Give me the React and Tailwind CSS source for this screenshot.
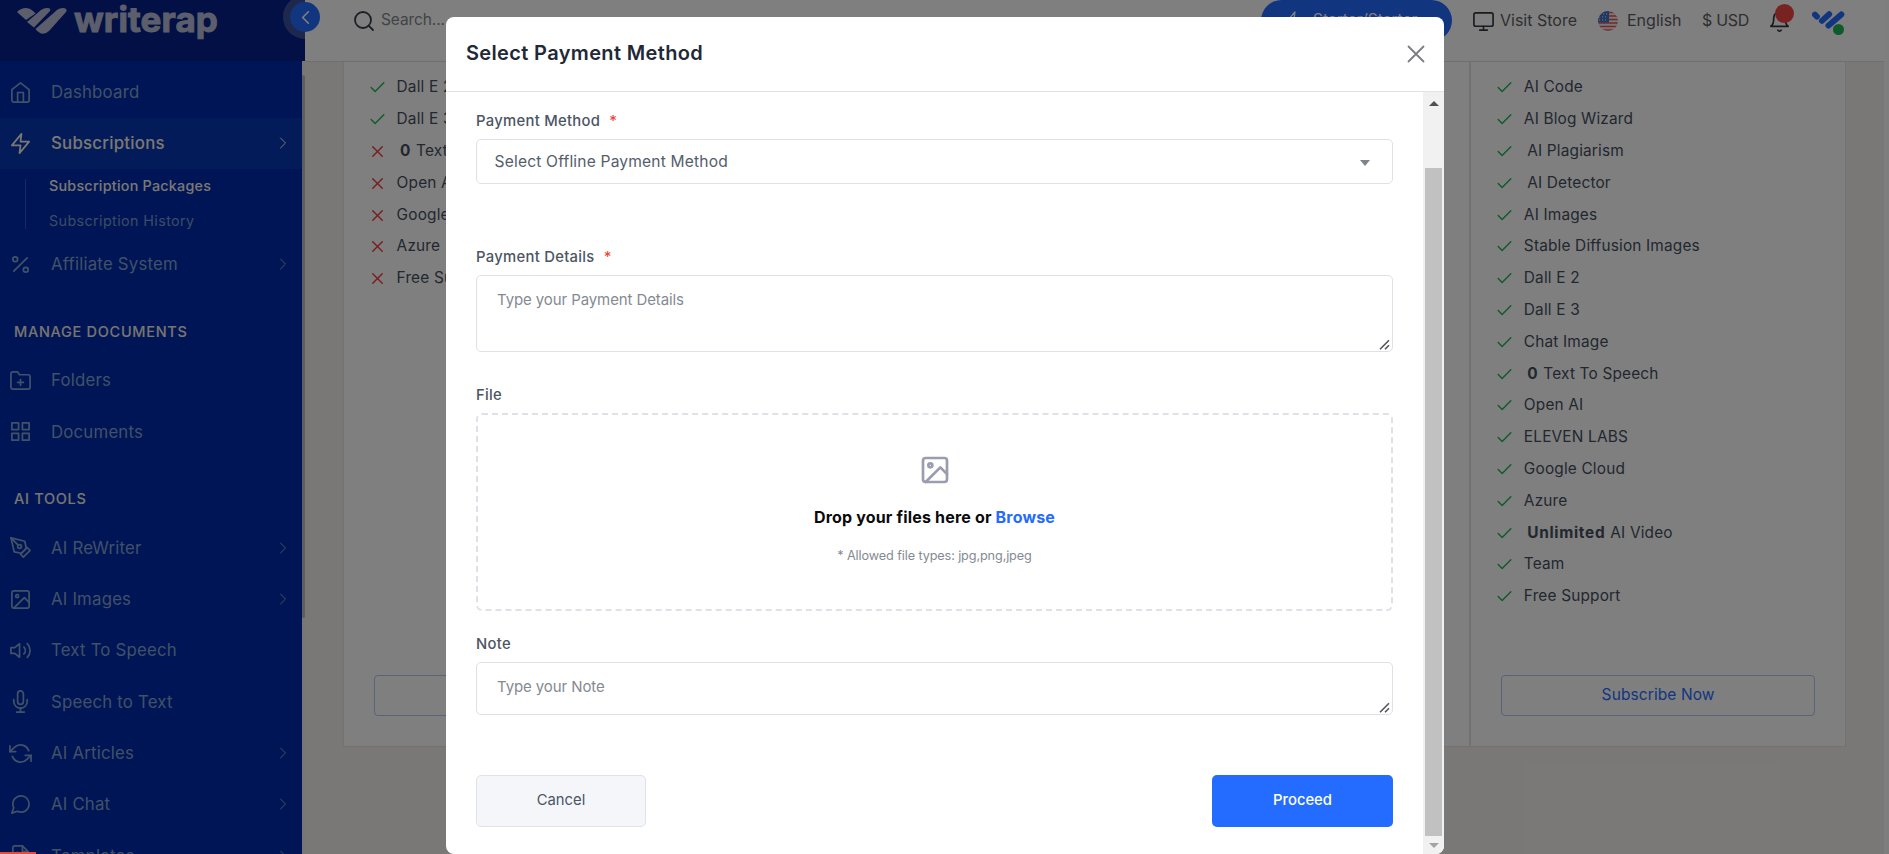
import React from "react";
import {
  FiHome, FiZap, FiPercent, FiFolderPlus, FiGrid, FiPenTool, FiImage, FiVolume2,
  FiMic, FiRefreshCcw, FiMessageCircle, FiFileText, FiChevronRight, FiChevronLeft,
  FiSearch, FiMonitor, FiBell, FiCheck, FiX,
} from "react-icons/fi";

function NavItem({ icon: Icon, label, arrow, active }) {
  return (
    <div
      className={
        "flex h-[51.3px] shrink-0 items-center pl-[9px] pr-[9px] " +
        (active ? "bg-[#0636b0] text-[#f5f0e8]" : "text-[#82a2cf]")
      }
    >
      <Icon size={23} strokeWidth={1.8} />
      <span className={"ml-[19px] flex-1 pt-px text-[16.8px] " + (active ? "font-medium tracking-[0.25px]" : "tracking-[0.2px]")}>
        {label}
      </span>
      {arrow && <FiChevronRight size={20} strokeWidth={1.2} />}
    </div>
  );
}

function NavHeading({ children }) {
  return (
    <div className="flex h-[65px] shrink-0 items-end pb-[13px] pl-[14px] text-[14.5px] font-medium leading-5 tracking-[0.7px] text-[#f0ebe3]">
      {children}
    </div>
  );
}

function BrandMark({ className }) {
  return (
    <svg viewBox="0 0 100 54" className={className} fill="none" stroke="currentColor" strokeLinecap="round">
      <path d="M9 10.500L15 16.500" strokeWidth="18" />
      <path d="M52 9.500L30 29.500" strokeWidth="18" />
      <path d="M89 10L50 44" strokeWidth="18" />
    </svg>
  );
}

function Logo() {
  return (
    <svg viewBox="0 0 50 27" className="h-[27px] w-[50px]" fill="#b9bfd6">
      <path d="M0 4 Q4 0 9 0 Q13 0 16 3 L18.500 5.500 L9 12 Z" />
      <path d="M10 14 L24 2 Q27 0 30 0 Q35 0 32.500 3.500 L17 19.500 Z" />
      <path d="M18.500 21 L40 2 Q42.500 0 46 0 Q51 0.500 49 4 L32 23 Q25 29.500 18.500 21 Z" />
    </svg>
  );
}

function Feature({ ok = true, bold, indent, children }) {
  return (
    <li className="flex h-[31.8px] items-center text-[15.4px] tracking-[0.17px] text-[#464f5e]">
      {ok ? (
        <FiCheck size={19} strokeWidth={1.8} className="mt-[2px] text-[#1fb45a]" />
      ) : (
        <FiX size={19} strokeWidth={1.8} className="mt-[2px] text-[#ee3d3d]" />
      )}
      <span className={indent ? "ml-[13px]" : "ml-[9.6px]"}>
        {bold && <b className="mr-[5px] font-bold tracking-[0.7px]">{bold}</b>}
        {children}
      </span>
    </li>
  );
}

function PlanCard({ className = "", children }) {
  return (
    <div className={"flex flex-1 flex-col border-b border-[#e8e5e1] bg-white pb-[30px] pt-[9px] " + className}>
      <ul className="flex-1 pl-[24px]">{children}</ul>
      <div className="mx-[30px] flex h-[41px] items-center justify-center rounded-[4px] border border-[#b0c4f4] pb-px text-[15.5px] tracking-[0.1px] text-[#246bff]">
        Subscribe Now
      </div>
    </div>
  );
}

function Flag() {
  return (
    <svg viewBox="0 0 20 20" className="size-5">
      <clipPath id="flag">
        <circle cx="10" cy="10" r="10" />
      </clipPath>
      <g clipPath="url(#flag)">
        <rect width="20" height="20" fill="#f3ece8" />
        <path d="M0 1.500h20M0 5h20M0 8.500h20M0 12h20M0 15.500h20M0 19h20" stroke="#e2545a" strokeWidth="1.700" />
        <rect width="11" height="11.500" fill="#3f6fc4" />
        <path d="M2 3h8M1 6h9M1 9h9" stroke="#e8eefa" strokeDasharray="1.200 1.800" strokeWidth="1.200" />
      </g>
    </svg>
  );
}

function Sidebar() {
  return (
    <aside className="relative flex h-[854px] w-[305px] shrink-0 flex-col bg-[#002aaa] text-white">
      <div className="flex h-[61px] shrink-0 items-start bg-[#04218c] pl-[17px] pt-[8px]">
        <Logo />
        <span className="ml-[7px] mt-[-6px] text-[35px] font-bold leading-[35px] tracking-[0.1px] text-[#b9bfd6] [-webkit-text-stroke:1px_#b9bfd6]">
          writerap
        </span>
      </div>
      <div className="flex min-h-0 flex-1">
        <nav className="flex w-[302px] flex-col overflow-hidden pt-[5.5px]">
          <NavItem icon={FiHome} label="Dashboard" />
          <NavItem icon={FiZap} label="Subscriptions" arrow active />
          <div className="flex h-[69.3px] shrink-0 items-center pl-[25px] text-[14.3px]">
            <div className="h-[50px] w-px bg-[#2456c8]" />
            <div className="ml-[23px] flex flex-col pb-[2px]">
              <span className="flex h-[35px] items-center font-medium tracking-[0.25px] text-[#f5f0e8]">Subscription Packages</span>
              <span className="flex h-[35px] items-center tracking-[0.4px] text-[#7898cc]">Subscription History</span>
            </div>
          </div>
          <NavItem icon={FiPercent} label="Affiliate System" arrow />
          <NavHeading>MANAGE DOCUMENTS</NavHeading>
          <NavItem icon={FiFolderPlus} label="Folders" />
          <NavItem icon={FiGrid} label="Documents" />
          <NavHeading>AI TOOLS</NavHeading>
          <NavItem icon={FiPenTool} label="AI ReWriter" arrow />
          <NavItem icon={FiImage} label="AI Images" arrow />
          <NavItem icon={FiVolume2} label="Text To Speech" />
          <NavItem icon={FiMic} label="Speech to Text" />
          <NavItem icon={FiRefreshCcw} label="AI Articles" arrow />
          <NavItem icon={FiMessageCircle} label="AI Chat" arrow />
          <NavItem icon={FiFileText} label="Templates" arrow />
        </nav>
        <div className="w-[3px] bg-[#f1efec] pt-[14px]">
          <div className="h-[543px] rounded bg-[#b9bcc4]" />
        </div>
      </div>
      <div className="absolute left-[283px] top-[-5px] h-[44px] w-[22px] rounded-l-full bg-[#3b5199]" />
      <div className="absolute left-[290px] top-[2px] flex size-[30px] items-center justify-center rounded-full bg-[#246bff]">
        <FiChevronLeft size={23} strokeWidth={1.7} />
      </div>
    </aside>
  );
}

function TopBar() {
  return (
    <header className="flex h-[62px] shrink-0 items-start border-b border-[#e0deda] bg-white pl-[47px] pr-[39px] text-[16px] text-[#5c5e63]">
      <div className="flex h-[41px] items-center">
        <FiSearch size={24} strokeWidth={1.8} className="text-[#3c3f48]" />
        <span className="ml-[5px] pb-px text-[15.5px] tracking-[-0.1px] text-[#85868b]">Search...</span>
      </div>
      <div className="flex-1" />
      <div className="flex h-[41px] w-[191px] items-center rounded-full bg-[#246bff] pl-[22px] text-[15.5px] text-white">
        <FiZap size={22} strokeWidth={1.5} />
        <span className="ml-[8px] pb-px">Starter/Starter</span>
      </div>
      <FiMonitor size={23} strokeWidth={1.7} className="ml-[20px] mt-[10px] text-[#33363c]" />
      <span className="ml-[5px] flex h-[39px] w-[98px] items-center">Visit Store</span>
      <div className="mt-[11px] w-[29px]">
        <Flag />
      </div>
      <span className="flex h-[39px] w-[75px] items-center">English</span>
      <span className="flex h-[39px] w-[66px] items-center tracking-[-0.3px]">$ USD</span>
      <div className="relative mt-[10px] w-[44px]">
        <FiBell size={23} strokeWidth={1.8} className="text-[#33363c]" />
        <span className="absolute left-[7px] top-[-6px] size-[19px] rounded-full bg-[#f04444]" />
      </div>
      <div className="relative mt-[11px] w-[33px] text-[#246bff]">
        <BrandMark className="h-[18px] w-[33px]" />
        <span className="absolute left-[21px] top-[13px] size-[11px] rounded-full bg-[#1fb455]" />
      </div>
    </header>
  );
}

function Plans() {
  return (
    <main className="flex flex-1 flex-col pl-[38px] pr-[38px]">
      <div className="flex h-[685px] border-x border-[#e8e5e1]">
        <PlanCard>
          <Feature>Dall E 2</Feature>
          <Feature>Dall E 3</Feature>
          <Feature ok={false} bold="0" indent>Text To Speech</Feature>
          <Feature ok={false}>Open AI</Feature>
          <Feature ok={false}>Google Cloud</Feature>
          <Feature ok={false}>Azure</Feature>
          <Feature ok={false}>Free Support</Feature>
        </PlanCard>
        <PlanCard className="border-l-2" />
        <PlanCard className="border-l-2" />
        <PlanCard className="border-l-2">
          <Feature>AI Code</Feature>
          <Feature>AI Blog Wizard</Feature>
          <Feature indent>AI Plagiarism</Feature>
          <Feature indent>AI Detector</Feature>
          <Feature>AI Images</Feature>
          <Feature>Stable Diffusion Images</Feature>
          <Feature>Dall E 2</Feature>
          <Feature>Dall E 3</Feature>
          <Feature>Chat Image</Feature>
          <Feature bold="0" indent>Text To Speech</Feature>
          <Feature>Open AI</Feature>
          <Feature>ELEVEN LABS</Feature>
          <Feature>Google Cloud</Feature>
          <Feature>Azure</Feature>
          <Feature bold="Unlimited" indent>AI Video</Feature>
          <Feature>Team</Feature>
          <Feature>Free Support</Feature>
        </PlanCard>
      </div>
    </main>
  );
}

function Label({ required, children }) {
  return (
    <div className="flex h-5 items-center text-[14.8px] font-medium tracking-[0.3px] text-[#4b5563]">
      {children}
      {required && <span className="ml-[9px] text-[#f04438]">*</span>}
    </div>
  );
}

function Grip() {
  return (
    <svg viewBox="0 0 11 11" className="size-[11px] self-end" stroke="#55565b" strokeWidth="1.600">
      <path d="M1 10.300L10 1.300M6 10.300L10 6.300" />
    </svg>
  );
}

function TextArea({ className, children }) {
  return (
    <div className={"flex justify-between rounded-[5px] border border-[#dfe1e8] pb-px pl-5 pr-[2px] text-[15px] leading-[22px] tracking-[-0.1px] text-[#858a92] " + className}>
      <span>{children}</span>
      <Grip />
    </div>
  );
}

function Modal() {
  return (
    <div className="flex h-[837px] w-[998px] flex-col overflow-hidden rounded-[8px] bg-white">
      <div className="flex h-[75px] shrink-0 items-center justify-between border-b border-[#e0e2e6] pl-5 pr-[16px]">
        <h2 className="pb-[2px] text-[20px] font-semibold tracking-[0.35px] text-[#1f2937]">Select Payment Method</h2>
        <svg viewBox="0 0 24 24" className="size-6" stroke="#7c7d81" strokeWidth="1.800" strokeLinecap="round">
          <path d="M4.500 4.500L19.500 19.500M19.500 4.500L4.500 19.500" />
        </svg>
      </div>
      <div className="flex min-h-0 flex-1">
        <div className="flex flex-1 flex-col pl-[30px] pr-[30px] pt-[19px]">
          <Label required>Payment Method</Label>
          <div className="mt-[8px] flex h-[45px] items-center justify-between rounded-[5px] border border-[#dfe1e6] pl-[17.5px] pr-[22px] text-[15.6px] tracking-[0.17px] text-[#555e6b]">
            <span className="pt-px">Select Offline Payment Method</span>
            <svg viewBox="0 0 10 6" className="mt-[2px] h-[6px] w-[10px]" fill="#7d848d">
              <path d="M0 0H10L5 6Z" />
            </svg>
          </div>
          <div className="mt-[63px]">
            <Label required>Payment Details</Label>
          </div>
          <TextArea className="mt-[8px] h-[77px] pt-[13px]">Type your Payment Details</TextArea>
          <div className="mt-[33px]">
            <Label>File</Label>
          </div>
          <div className="mt-[8px] flex h-[198px] flex-col items-center rounded-[6px] border-2 border-dashed border-[#dfe1e6] pt-[39px]">
            <FiImage size={32} strokeWidth={2} className="text-[#9a9cb0]" />
            <div className="mt-[19px] text-[16px] font-bold leading-6 tracking-[0.18px] text-[#0a0a0c]">
              Drop your files here or <span className="text-[#246bff]">Browse</span>
            </div>
            <div className="mt-[17px] text-[12.7px] leading-5 tracking-[-0.12px] text-[#858a92]">* Allowed file types: jpg,png,jpeg</div>
          </div>
          <div className="mt-[23px]">
            <Label>Note</Label>
          </div>
          <TextArea className="mt-[8px] h-[53px] pt-[13px]">Type your Note</TextArea>
          <div className="mt-[60px] flex justify-between text-[14.8px]">
            <div className="flex h-[52px] w-[170px] items-center justify-center rounded-[5px] border border-[#dfe2e8] bg-[#f4f6f9] pb-[2px] text-[#4b5563]">
              Cancel
            </div>
            <div className="flex h-[52px] w-[181px] items-center justify-center rounded-[5px] bg-[#246bff] pb-[2px] font-medium text-white">
              Proceed
            </div>
          </div>
        </div>
        <div className="flex w-[21px] flex-col items-center bg-[#f1f1f1]">
          <svg viewBox="0 0 10 5" className="mt-[9px] h-[5px] w-[10px]" fill="#505050">
            <path d="M0 5H10L5 0Z" />
          </svg>
          <div className="mt-[62px] h-[668px] w-[17px] bg-[#c1c1c1]" />
          <svg viewBox="0 0 10 5" className="mt-[7px] h-[5px] w-[10px]" fill="#a3a3a3">
            <path d="M0 0H10L5 5Z" />
          </svg>
        </div>
      </div>
    </div>
  );
}

export default function App() {
  return (
    <div className="relative h-[854px] w-[1889px] overflow-hidden font-['Inter',sans-serif]">
      <div className="flex h-full">
        <Sidebar />
        <div className="flex min-w-0 flex-1">
          <div className="flex w-[1579px] flex-col bg-[#f4f1ed]">
            <TopBar />
            <Plans />
          </div>
          <div className="flex-1 bg-[#fcfcfc]" />
        </div>
      </div>
      <div className="absolute inset-0 flex items-start bg-black/50 pl-[446px] pt-[17px]">
        <Modal />
      </div>
      <div className="absolute bottom-0 left-0 h-[2px] w-[36px] bg-[#ea4a35]" />
    </div>
  );
}
